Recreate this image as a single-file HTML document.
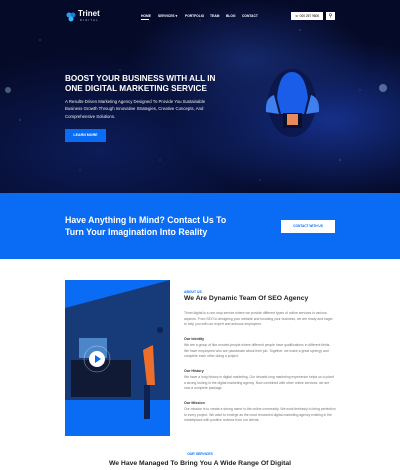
<!DOCTYPE html>
<html><head><style>
*{margin:0;padding:0;box-sizing:border-box}
body{width:400px;height:470px;overflow:hidden;font-family:"Liberation Sans",sans-serif;background:#fff;position:relative}
.hero{position:absolute;left:0;top:0;width:400px;height:193px;background:radial-gradient(ellipse 120px 60px at 250px 60px,#15286a 0%,transparent 100%),radial-gradient(ellipse 160px 80px at 330px 120px,#16308a 0%,transparent 100%),radial-gradient(ellipse 200px 100px at 100px 150px,#0c1c58 0%,transparent 100%),#050a28}
.a{position:absolute;white-space:nowrap}
.nav{font-size:3.3px;color:#fff;font-weight:bold;top:14px}
.blue{position:absolute;left:0;top:193px;width:400px;height:66px;background:#0a6cf5}
p.t{position:absolute;left:184px;width:152px;font-size:3.4px;line-height:5.6px;color:#777}
h4{position:absolute;left:184px;font-size:3.6px;color:#333}
</style></head><body>
<div class="hero">
 <svg class="a" style="left:0;top:0" width="400" height="193">
  <g fill="#fff" opacity=".6"><circle cx="40" cy="40" r=".5"/><circle cx="120" cy="70" r=".4"/><circle cx="300" cy="30" r=".5"/><circle cx="360" cy="90" r=".4"/><circle cx="80" cy="170" r=".4"/><circle cx="200" cy="20" r=".4"/><circle cx="340" cy="160" r=".5"/><circle cx="160" cy="160" r=".4"/><circle cx="20" cy="120" r=".5"/><circle cx="260" cy="180" r=".4"/></g>
  <circle cx="8" cy="90" r="3" fill="#8ab" opacity=".5"/><circle cx="383" cy="88" r="4" fill="#9bd" opacity=".5"/>
  <ellipse cx="292" cy="103" rx="24" ry="34" fill="#0a1340" opacity=".7"/>
  <path d="M277 98 Q279 72 292 72 Q305 72 308 98 L304 114 L281 114Z" fill="#1a5de8"/>
  <path d="M274 95 Q265 98 266 112 L279 114Z M311 95 Q320 98 319 112 L306 114Z" fill="#3f7ff0"/>
  <rect x="283" y="113" width="19" height="15" fill="#0a0f2a"/>
  <rect x="287" y="114" width="11" height="11" fill="#e98a5a"/>
 </svg>
 <svg class="a" style="left:65px;top:12px" width="12" height="10"><circle cx="4" cy="3" r="2.5" fill="#2aa0ef"/><circle cx="8" cy="3" r="2.5" fill="#1a7ad8"/><circle cx="6" cy="7" r="2.5" fill="#39b4f5"/></svg>
 <div class="a" style="left:78px;top:9px;font-size:8px;font-weight:bold;color:#fff">Trinet</div>
 <div class="a" style="left:80px;top:19px;font-size:2.6px;letter-spacing:1.3px;color:#ccc">DIGITAL</div>
 <div class="a nav" style="left:141px">HOME</div>
 <div class="a" style="left:141px;top:19px;width:8px;height:.6px;background:#fff"></div>
 <div class="a nav" style="left:158px">SERVICES ▾</div>
 <div class="a nav" style="left:185px">PORTFOLIO</div>
 <div class="a nav" style="left:210px">TEAM</div>
 <div class="a nav" style="left:226px">BLOG</div>
 <div class="a nav" style="left:242px">CONTACT</div>
 <div class="a" style="left:291px;top:12px;width:32px;height:8px;background:#fff;font-size:3.2px;color:#000;text-align:center;line-height:8px">☏ 000 257 9800</div>
 <div class="a" style="left:326px;top:12px;width:9px;height:8px;background:#fff;font-size:5px;text-align:center;line-height:8px">⚲</div>
 <div class="a" style="left:65px;top:74px;font-size:8.2px;font-weight:bold;color:#fff;line-height:10px">BOOST YOUR BUSINESS WITH ALL IN<br>ONE DIGITAL MARKETING SERVICE</div>
 <div class="a" style="left:65px;top:98px;font-size:4.3px;color:#eee;line-height:7.3px">A Results-Driven Marketing Agency Designed To Provide You Sustainable<br>Business Growth Through Innovative Strategies, Creative Concepts, And<br>Comprehensive Solutions.</div>
 <div class="a" style="left:65px;top:129px;width:41px;height:13px;background:#0a6cf5;color:#fff;font-size:3.6px;font-weight:bold;text-align:center;line-height:13px">LEARN MORE</div>
</div>
<div class="blue"></div>
<div class="a" style="left:65px;top:215px;font-size:8.8px;font-weight:bold;color:#fff;line-height:11.5px">Have Anything In Mind? Contact Us To<br>Turn Your Imagination Into Reality</div>
<div class="a" style="left:281px;top:220px;width:54px;height:13px;background:#fff;color:#0a6cf5;font-size:3.2px;font-weight:bold;text-align:center;line-height:13px">CONTACT WITH US</div>
<svg class="a" style="left:65px;top:280px" width="105" height="156">
 <rect width="105" height="156" fill="#0a6cf5"/>
 <path d="M0 28 L105 0 V156 H0Z" fill="#173a78"/>
 <rect x="0" y="120" width="105" height="36" fill="#0a6cf5"/>
 <rect x="14" y="58" width="28" height="20" fill="#4a86c8"/>
 <rect x="6" y="80" width="60" height="37" fill="#111a35"/>
 <path d="M78 70 L88 65 L90 105 L82 105Z" fill="#ef6f2a"/>
 <rect x="79" y="105" width="6" height="34" fill="#102050"/>
 <circle cx="95" cy="50" r="3" fill="#102050"/>
 <circle cx="32" cy="79" r="13" fill="none" stroke="#fff" stroke-width=".5" opacity=".6"/>
 <circle cx="32" cy="79" r="8" fill="#fff"/>
 <path d="M30 75 L36 79 L30 83Z" fill="#0a6cf5"/>
</svg>
<div class="a" style="left:184px;top:290px;font-size:3.4px;color:#0a6cf5;font-weight:bold">ABOUT US</div>
<div class="a" style="left:184px;top:295px;font-size:6.8px;color:#222;font-weight:bold">We Are Dynamic Team Of SEO Agency</div>
<p class="t" style="top:311px">Trinet digital is a one-stop service where we provide different types of online services in various aspects. From SEO to designing your website and boosting your business, we are ready and eager to help you with our expert and arduous employees.</p>
<h4 style="top:337px">Our Identity</h4>
<p class="t" style="top:343px">We are a group of like-minded people where different people have qualifications in different fields. We have employees who are passionate about their job. Together, we make a great synergy and complete each other doing a project.</p>
<h4 style="top:369px">Our History</h4>
<p class="t" style="top:375px">We have a long history in digital marketing. Our decade-long marketing experience helps us to plant a strong footing in the digital marketing agency. Now combined with other online services, we are now a complete package.</p>
<h4 style="top:401px">Our Mission</h4>
<p class="t" style="top:407px">Our mission is to create a strong name in the online community. We work tirelessly to bring perfection to every project. We want to emerge as the most renowned digital marketing agency existing in the marketplace with positive reviews from our clients.</p>
<div class="a" style="left:0;width:400px;text-align:center;top:452px;font-size:3.4px;color:#0a6cf5;font-weight:bold">OUR SERVICES</div>
<div class="a" style="left:0;width:400px;text-align:center;top:460px;font-size:6.8px;color:#222;font-weight:bold">We Have Managed To Bring You A Wide Range Of Digital</div>
</body></html>
